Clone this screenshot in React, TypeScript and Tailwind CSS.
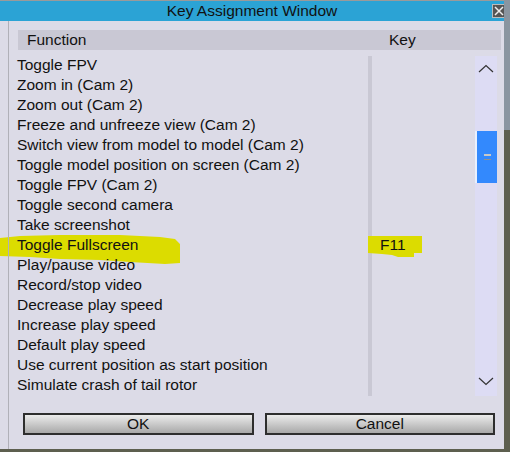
import React from "react";

const rows = [
  "Toggle FPV",
  "Zoom in (Cam 2)",
  "Zoom out (Cam 2)",
  "Freeze and unfreeze view (Cam 2)",
  "Switch view from model to model (Cam 2)",
  "Toggle model position on screen (Cam 2)",
  "Toggle FPV (Cam 2)",
  "Toggle second camera",
  "Take screenshot",
  "Toggle Fullscreen",
  "Play/pause video",
  "Record/stop video",
  "Decrease play speed",
  "Increase play speed",
  "Default play speed",
  "Use current position as start position",
  "Simulate crash of tail rotor",
];

const keys: Record<string, string> = { "Toggle Fullscreen": "F11" };

function Chevron({ down }: { down?: boolean }) {
  return (
    <svg width="16" height="9" viewBox="0 0 16 9" className="block">
      <path d={down ? "M1 1 L8 7.5 L15 1" : "M1 8 L8 1.5 L15 8"} fill="none" stroke="#333" strokeWidth="1.2" />
    </svg>
  );
}

function Btn({ label }: { label: string }) {
  return (
    <button className="h-[22px] flex-1 border-2 border-[#2e2e2e] bg-gradient-to-b from-[#ececec] to-[#a9a9a9] text-[15.5px] leading-none text-[#111]">
      {label}
    </button>
  );
}

export default function App() {
  return (
    <div
      className="relative h-[452px] w-[510px] overflow-hidden bg-[#5d5f4f]"
      style={{ fontFamily: '"Liberation Sans", Arial, sans-serif' }}
    >
      <div className="flex h-[449px] w-[504px] flex-col border-t border-[#9a9a9a] bg-[#dcdbe7]">
        {/* title bar */}
        <div className="relative flex h-[20px] items-center justify-center bg-[#2ba3d5] text-[15.5px] text-[#111]">
          Key Assignment Window
          <div className="absolute right-[-2px] top-[3px] flex h-[14px] w-[14px] items-center justify-center border border-[#bbb] bg-[#555]">
            <svg width="10" height="10" viewBox="0 0 10 10">
              <path d="M1 1 L9 9 M9 1 L1 9" stroke="#eee" strokeWidth="1.5" />
            </svg>
          </div>
        </div>

        {/* header */}
        <div className="ml-[18px] mr-[3px] mt-[9px] flex h-[20px] items-center bg-[#c9c8d4] text-[15.5px] text-[#111]">
          <span className="w-[371px] pl-[9px]">Function</span>
          <span>Key</span>
        </div>

        {/* list */}
        <div className="relative mt-[5px] flex h-[342px]">
          <div className="w-[368px]">
            {rows.map((r) => (
              <div key={r} className="flex h-[20px] items-center whitespace-nowrap pl-[17px] text-[15.5px] text-[#111]">
                <span className="relative z-10">{r}</span>
              </div>
            ))}
          </div>
          <div className="my-[1px] w-[4px] bg-[#c9c8d4]" />
          <div className="w-[103px]">
            {rows.map((r) => (
              <div key={r} className="flex h-[20px] items-center pl-[8px] text-[15.5px] text-[#111]">
                <span className="relative z-10">{keys[r] ?? ""}</span>
              </div>
            ))}
          </div>
          {/* scrollbar */}
          <div className="my-[1px] flex w-[22px] flex-col items-center bg-[#dddcf4]">
            <div className="mt-[8px]">
              <Chevron />
            </div>
            <div className="mt-[58px] flex h-[52px] w-[22px] flex-col items-center justify-center gap-[3px] border-l-2 border-[#e8f0ff] bg-[#3389fd]">
              <div className="h-[2px] w-[7px] bg-[#c8c8c8]" />
              <div className="h-[1px] w-[7px] bg-[#909090]" />
            </div>
            <div className="mb-[10px] mt-auto">
              <Chevron down />
            </div>
          </div>

          {/* marker highlights */}
          <svg className="absolute left-0 top-[177px]" width="190" height="34" viewBox="0 0 190 34">
            <path
              d="M0 6 L20 4 L60 3 L120 3 L160 5 L175 7 L180 12 L180 31 L165 32 L130 30 L100 28 L60 27 L30 25 L0 24 Z"
              fill="#dcdc00"
            />
          </svg>
          <svg className="absolute left-[368px] top-[177px]" width="60" height="30" viewBox="0 0 60 30">
            <path d="M0 4 L54 4 L54 21 L46 21 L46 25 L30 25 L24 23 L14 22 L0 21 Z" fill="#dcdc00" />
          </svg>
        </div>

        {/* buttons */}
        <div className="mt-[16px] flex gap-[11px] pl-[23px] pr-[9px]">
          <Btn label="OK" />
          <Btn label="Cancel" />
        </div>
      </div>
      <div className="absolute left-[8px] top-[21px] h-[428px] w-px bg-[#b0b0b8]" />
      <div className="absolute right-0 top-0 h-[130px] w-[6px] bg-[#8a95a0]" />
    </div>
  );
}
